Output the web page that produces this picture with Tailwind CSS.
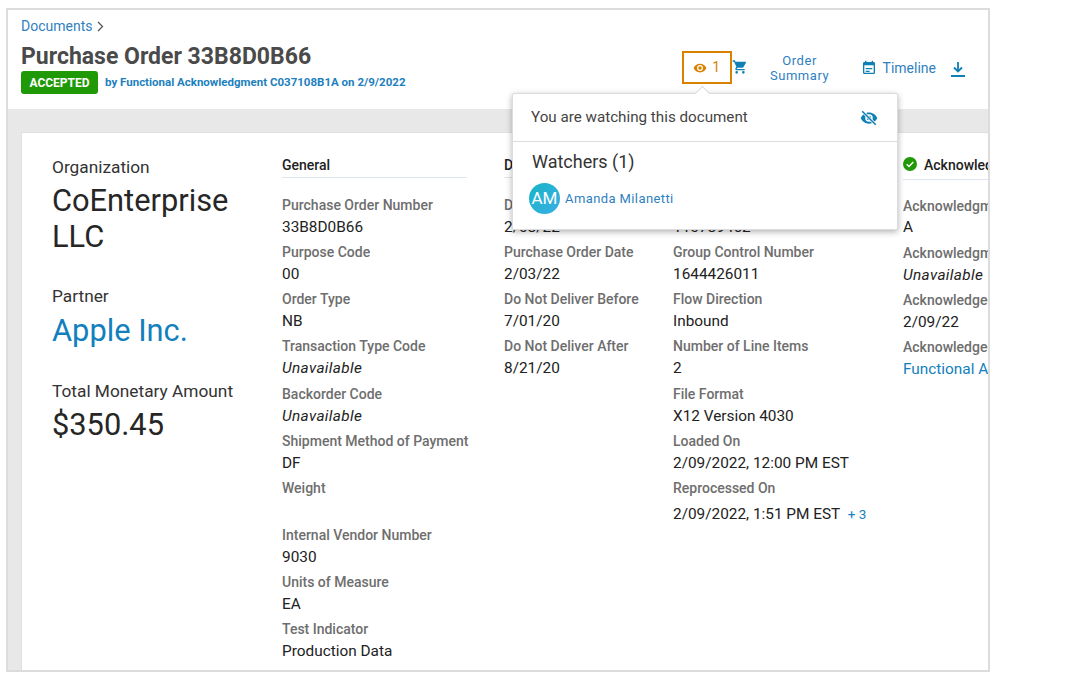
<!DOCTYPE html>
<html><head><script src="https://cdn.jsdelivr.net/npm/@tailwindcss/browser@4"></script></head>
<body class="bg-white font-['Roboto',sans-serif]">
<div class="w-[1088px] h-[674px] overflow-hidden pt-2 pl-1.5">
<div class="relative w-[984px] h-[664px] border-2 border-[#dcdcdc] bg-[#e8e8e8] overflow-hidden flex flex-col">
  <header class="h-[99px] bg-white shrink-0 flex justify-between pl-[13px] pr-[22px]">
    <div class="pt-[8px]">
      <div class="flex items-center gap-1 text-[14px] leading-[16px] text-[#2f7fc1]">Documents
        <svg class="w-[9px] h-[11px]" viewBox="0 0 9 11" fill="none" stroke="#555" stroke-width="1.3"><path d="M2 1l4.5 4.5L2 10"/></svg></div>
      <h1 class="mt-[10px] text-[23px] leading-[26px] font-bold text-[#4a4a4a]">Purchase Order 33B8D0B66</h1>
      <div class="mt-[1px] flex items-center gap-[7px]">
        <span class="h-[23px] w-[77px] rounded-[3px] bg-[#1f9a06] text-white text-[12px] font-bold flex items-center justify-center">ACCEPTED</span>
        <span class="text-[11.5px] font-bold text-[#1d7fbd]">by Functional Acknowledgment C037108B1A on 2/9/2022</span>
      </div>
    </div>
    <div class="flex items-start pt-[41px]">
      <div class="w-[50px] h-[33px] border-2 border-[#d98200] flex items-center justify-center gap-[5px] text-[14px] text-[#d98200]">
        <svg class="w-[14px] h-[14px]" viewBox="0 0 24 24" fill="#d98200"><path d="M12 4.5C7 4.5 2.7 7.6 1 12c1.7 4.4 6 7.5 11 7.500s9.300-3.100 11-7.500c-1.700-4.400-6-7.500-11-7.500zM12 17a5 5 0 110-10 5 5 0 010 10zm0-8a3 3 0 100 6 3 3 0 000-6z"/></svg>1</div>
      <svg class="mt-[8px] w-[16px] h-[16px]" viewBox="0 0 24 24" fill="#0f7fb5"><path d="M7 18a2 2 0 100 4 2 2 0 000-4zM1 2v2h2l3.600 7.590-1.350 2.450C5.090 14.320 5 14.650 5 15c0 1.100.9 2 2 2h12v-2H7.420a.25.25 0 01-.25-.25l.03-.12L8.100 13h7.450c.75 0 1.410-.41 1.750-1.030l3.580-6.490A1 1 0 0020 4H5.210l-.94-2H1zm16 16a2 2 0 100 4 2 2 0 000-4z"/></svg>
      <div class="w-[62px] ml-[21px] mt-[2px] text-center text-[13px] leading-[15px] text-[#2f7fc1] tracking-[0.55px]">Order Summary</div>
      <svg class="ml-[30px] mt-[9px] w-[16px] h-[16px]" viewBox="0 0 24 24" fill="#0f7fb5"><path d="M17 12H7v2h10v-2zm-4 4H7v2h6v-2zM19 3h-1V1h-2v2H8V1H6v2H5a2 2 0 00-2 2v14a2 2 0 002 2h14a2 2 0 002-2V5a2 2 0 00-2-2zm0 16H5V8h14v11z"/></svg>
      <div class="ml-[6px] mt-[8px] text-[14px] leading-[18px] text-[#2f7fc1]">Timeline</div>
      <svg class="ml-[14px] mt-[10px] w-[16px] h-[16px]" viewBox="0 0 16 16" fill="none" stroke="#0f7fb5" stroke-width="1.800"><path d="M8 1v9M4 6.500L8 10.500l4-4M1 15h14"/></svg>
    </div>
  </header>
  <main class="mt-[23px] ml-[13px] w-[1000px] h-[540px] bg-white border-t border-l border-[#e0e0e0] flex text-[#222] text-[15.36px]">
    <section class="w-[229px] pl-[30px] pt-[23px] shrink-0">
      <div class="text-[17.3px] leading-[22px] text-[#333]">Organization</div>
      <div class="mt-[5px] text-[30.8px] leading-[36px] text-[#262626]">CoEnterprise LLC</div>
      <div class="mt-[30px] text-[17.3px] leading-[22px] text-[#333]">Partner</div>
      <div class="mt-[6px] text-[30.8px] leading-[36px] text-[#1180bd]">Apple Inc.</div>
      <div class="mt-[30px] text-[17.3px] leading-[24px] text-[#333]">Total Monetary Amount</div>
      <div class="mt-[4px] text-[30.8px] leading-[36px] text-[#262626]">$350.45</div>
    </section>
    <section class="w-[185px] ml-[31px] pt-[23px] shrink-0">
      <div class="text-[14px] leading-[18px] font-medium border-b border-[#e0e6f0] h-[22px]">General</div>
      <div class="mt-[11px] flex flex-col">
        <div class="h-[47px] pt-[7px]"><div class="text-[14px] leading-[18px] font-medium text-[#6e6e6e] whitespace-nowrap">Purchase Order Number</div><div class="leading-[22px] mt-[2px]">33B8D0B66</div></div>
        <div class="h-[47px] pt-[7px]"><div class="text-[14px] leading-[18px] font-medium text-[#6e6e6e] whitespace-nowrap">Purpose Code</div><div class="leading-[22px] mt-[2px]">00</div></div>
        <div class="h-[47px] pt-[7px]"><div class="text-[14px] leading-[18px] font-medium text-[#6e6e6e] whitespace-nowrap">Order Type</div><div class="leading-[22px] mt-[2px]">NB</div></div>
        <div class="h-[47px] pt-[7px]"><div class="text-[14px] leading-[18px] font-medium text-[#6e6e6e] whitespace-nowrap">Transaction Type Code</div><div class="leading-[22px] mt-[2px] italic tracking-[0.35px]">Unavailable</div></div>
        <div class="h-[47px] pt-[8px]"><div class="text-[14px] leading-[18px] font-medium text-[#6e6e6e] whitespace-nowrap">Backorder Code</div><div class="leading-[22px] mt-[2px] italic tracking-[0.35px]">Unavailable</div></div>
        <div class="h-[47px] pt-[8px]"><div class="text-[14px] leading-[18px] font-medium text-[#6e6e6e] whitespace-nowrap">Shipment Method of Payment</div><div class="leading-[22px] mt-[2px]">DF</div></div>
        <div class="h-[47px] pt-[8px]"><div class="text-[14px] leading-[18px] font-medium text-[#6e6e6e] whitespace-nowrap">Weight</div></div>
        <div class="h-[47px] pt-[8px]"><div class="text-[14px] leading-[18px] font-medium text-[#6e6e6e] whitespace-nowrap">Internal Vendor Number</div><div class="leading-[22px] mt-[2px]">9030</div></div>
        <div class="h-[47px] pt-[8px]"><div class="text-[14px] leading-[18px] font-medium text-[#6e6e6e] whitespace-nowrap">Units of Measure</div><div class="leading-[22px] mt-[2px]">EA</div></div>
        <div class="h-[47px] pt-[8px]"><div class="text-[14px] leading-[18px] font-medium text-[#6e6e6e] whitespace-nowrap">Test Indicator</div><div class="leading-[22px] mt-[2px]">Production Data</div></div>
      </div>
    </section>
    <section class="w-[150px] ml-[37px] pt-[23px] shrink-0">
      <div class="text-[14px] leading-[18px] font-medium border-b border-[#e0e6f0] h-[22px]">Dates</div>
      <div class="mt-[11px] flex flex-col">
        <div class="h-[47px] pt-[7px]"><div class="text-[14px] leading-[18px] font-medium text-[#6e6e6e] whitespace-nowrap">Document Date</div><div class="leading-[22px] mt-[2px]">2/08/22</div></div>
        <div class="h-[47px] pt-[7px]"><div class="text-[14px] leading-[18px] font-medium text-[#6e6e6e] whitespace-nowrap">Purchase Order Date</div><div class="leading-[22px] mt-[2px]">2/03/22</div></div>
        <div class="h-[47px] pt-[7px]"><div class="text-[14px] leading-[18px] font-medium text-[#6e6e6e] whitespace-nowrap">Do Not Deliver Before</div><div class="leading-[22px] mt-[2px]">7/01/20</div></div>
        <div class="h-[47px] pt-[7px]"><div class="text-[14px] leading-[18px] font-medium text-[#6e6e6e] whitespace-nowrap">Do Not Deliver After</div><div class="leading-[22px] mt-[2px]">8/21/20</div></div>
      </div>
    </section>
    <section class="w-[200px] ml-[19px] pt-[23px] shrink-0">
      <div class="text-[14px] leading-[18px] font-medium border-b border-[#e0e6f0] h-[22px]">Details</div>
      <div class="mt-[11px] flex flex-col">
        <div class="h-[47px] pt-[7px]"><div class="text-[14px] leading-[18px] font-medium text-[#6e6e6e] whitespace-nowrap">Control Number</div><div class="leading-[22px] mt-[2px]">110789462</div></div>
        <div class="h-[47px] pt-[7px]"><div class="text-[14px] leading-[18px] font-medium text-[#6e6e6e] whitespace-nowrap">Group Control Number</div><div class="leading-[22px] mt-[2px]">1644426011</div></div>
        <div class="h-[47px] pt-[7px]"><div class="text-[14px] leading-[18px] font-medium text-[#6e6e6e] whitespace-nowrap">Flow Direction</div><div class="leading-[22px] mt-[2px]">Inbound</div></div>
        <div class="h-[47px] pt-[7px]"><div class="text-[14px] leading-[18px] font-medium text-[#6e6e6e] whitespace-nowrap">Number of Line Items</div><div class="leading-[22px] mt-[2px]">2</div></div>
        <div class="h-[47px] pt-[8px]"><div class="text-[14px] leading-[18px] font-medium text-[#6e6e6e] whitespace-nowrap">File Format</div><div class="leading-[22px] mt-[2px]">X12 Version 4030</div></div>
        <div class="h-[47px] pt-[8px]"><div class="text-[14px] leading-[18px] font-medium text-[#6e6e6e] whitespace-nowrap">Loaded On</div><div class="leading-[22px] mt-[2px]">2/09/2022, 12:00 PM EST</div></div>
        <div class="h-[47px] pt-[8px]"><div class="text-[14px] leading-[18px] font-medium text-[#6e6e6e] whitespace-nowrap">Reprocessed On</div><div class="leading-[22px] mt-[6px]">2/09/2022, 1:51 PM EST <span class="ml-1 text-[13.5px] text-[#1d7fbd]">+ 3</span></div></div>
      </div>
    </section>
    <section class="w-[200px] ml-[30px] pt-[23px] shrink-0">
      <div class="text-[14px] leading-[18px] font-medium border-b border-[#e0e6f0] h-[24px] flex items-start gap-[7px] whitespace-nowrap"><svg class="w-[14px] h-[14px] mt-[1px]" viewBox="0 0 14 14"><circle cx="7" cy="7" r="7" fill="#1f9a06"/><path d="M3.700 7.200l2.300 2.300 4.300-4.500" fill="none" stroke="#fff" stroke-width="1.500"/></svg>Acknowledgment</div>
      <div class="mt-[10px] flex flex-col">
        <div class="h-[47px] pt-[7px]"><div class="text-[14px] leading-[18px] font-medium text-[#6e6e6e] whitespace-nowrap">Acknowledgment Code</div><div class="leading-[22px] mt-[1px]">A</div></div>
        <div class="h-[47px] pt-[7px]"><div class="text-[14px] leading-[18px] font-medium text-[#6e6e6e] whitespace-nowrap">Acknowledgment Note</div><div class="leading-[22px] mt-[2px] italic tracking-[0.35px]">Unavailable</div></div>
        <div class="h-[47px] pt-[7px]"><div class="text-[14px] leading-[18px] font-medium text-[#6e6e6e] whitespace-nowrap">Acknowledged On</div><div class="leading-[22px] mt-[2px]">2/09/22</div></div>
        <div class="h-[47px] pt-[7px]"><div class="text-[14px] leading-[18px] font-medium text-[#6e6e6e] whitespace-nowrap">Acknowledged By</div><div class="leading-[22px] mt-[2px] text-[#1180bd] whitespace-nowrap">Functional Acknowledgment</div></div>
      </div>
    </section>
  </main>
  <div class="absolute left-[504px] top-[83px] w-[386px] h-[137px] bg-white border border-[#dcdce0] rounded-[2px] shadow-[0_2px_6px_rgba(0,0,0,0.3)]">
    <div class="absolute left-[184px] -top-[6px] w-[11px] h-[11px] rotate-45 bg-white border-l border-t border-[#dcdce0]"></div>
    <div class="h-[48px] border-b border-[#dcdce0] flex items-center justify-between pl-[18px] pr-[19px] text-[15.2px] text-[#444]">You are watching this document
      <svg class="w-[18px] h-[18px]" viewBox="0 0 24 24" fill="#0f7fb5"><path d="M12 4.500C7 4.500 2.700 7.600 1 12c1.700 4.400 6 7.500 11 7.500s9.300-3.100 11-7.500c-1.700-4.400-6-7.500-11-7.500zM12 17a5 5 0 110-10 5 5 0 010 10zm0-8a3 3 0 100 6 3 3 0 000-6z"/><path d="M3 3l18 18" stroke="#fff" stroke-width="4"/><path d="M3 3l18 18" stroke="#0f7fb5" stroke-width="2"/></svg>
    </div>
    <div class="pl-[19px] pt-[8px] text-[18px] leading-[24px] text-[#333]">Watchers (1)</div>
    <div class="mt-[9px] ml-[16px] flex items-center gap-[5px]">
      <div class="w-[31px] h-[31px] rounded-full bg-gradient-to-br from-[#14b4c4] to-[#38aee6] text-white text-[17px] flex items-center justify-center">AM</div>
      <span class="text-[13px] text-[#2f7fc1] tracking-[0.4px]">Amanda Milanetti</span>
    </div>
  </div>
</div>
</div>
</body></html>
